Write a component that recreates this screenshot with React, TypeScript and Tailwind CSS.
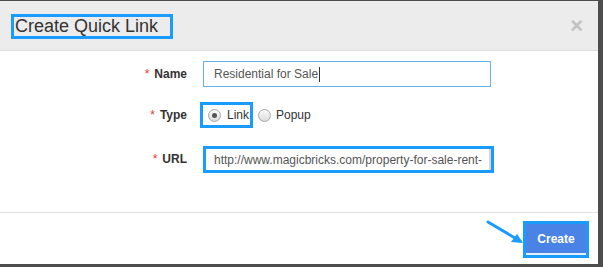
export default function App() {
  return (
    <div className="relative w-[603px] h-[267px] overflow-hidden bg-[#4d4d4d] pt-px font-['Liberation_Sans',Arial,sans-serif]">
      <div className="w-[598px] h-[263px] bg-white flex flex-col">
        {/* header */}
        <div className="h-[50px] shrink-0 bg-[#ececec] border-b border-[#dcdcdc] flex items-center justify-between pl-[11px] pr-[15px]">
          <h1 className="mt-[1px] h-[25px] w-[162px] border-[3px] border-[#1a9bff] pl-[1px] flex items-center whitespace-nowrap text-[18px] leading-none text-[#333]">
            Create Quick Link
          </h1>
          <span className="text-[22px] font-bold text-[#c2c2c2] leading-none">×</span>
        </div>

        {/* body */}
        <div className="flex-1 pt-[10px] text-[12px]">
          <div className="flex items-center h-[26px]">
            <label className="w-[188px] text-right font-bold text-[#333] pr-[1px]">
              <span className="text-[#e53935] font-normal mr-[5px]">*</span>Name
            </label>
            <div className="ml-[15px] w-[288px] h-[26px] border border-[#66afe9] flex items-center pl-[10px] text-[#555]">
              Residential for Sale
              <span className="w-px h-[15px] bg-[#333] ml-px" />
            </div>
          </div>

          <div className="flex items-center h-[26px] mt-[15px]">
            <label className="w-[188px] text-right font-bold text-[#333] pr-[1px]">
              <span className="text-[#e53935] font-normal mr-[5px]">*</span>Type
            </label>
            <div className="ml-[12px] flex items-center text-[#333]">
              <div className="h-[26px] w-[53px] border-[3px] border-[#1a9bff] flex items-center pl-[5px]">
                <span className="w-[13px] h-[13px] rounded-full border border-[#a8a8a8] bg-gradient-to-b from-[#fafafa] to-[#dcdcdc] flex items-center justify-center">
                  <span className="w-[5px] h-[5px] rounded-full bg-[#555]" />
                </span>
                <span className="ml-[6px]">Link</span>
              </div>
              <span className="ml-[5px] w-[13px] h-[13px] rounded-full border border-[#a8a8a8] bg-gradient-to-b from-[#fafafa] to-[#dcdcdc]" />
              <span className="ml-[5px]">Popup</span>
            </div>
          </div>

          <div className="flex items-center h-[27px] mt-[18px]">
            <label className="w-[188px] text-right font-bold text-[#333] pr-[1px] -mt-[2px]">
              <span className="text-[#e53935] font-normal mr-[5px]">*</span>URL
            </label>
            <div className="ml-[15px] w-[291px] h-[27px] border-[3px] border-[#1a9bff] flex items-center">
              <div className="flex-1 h-full border-r-2 border-[#d6d6d6] flex items-center pl-[8px] text-[#555] whitespace-nowrap overflow-hidden">
                http://www.magicbricks.com/property-for-sale-rent-
              </div>
            </div>
          </div>
        </div>

        {/* footer */}
        <div className="h-[52px] shrink-0 border-t border-[#e2e2e2] flex items-start justify-end pr-[9px] pt-[8px]">
          <div className="w-[66px] h-[37px] border-[3px] border-[#1a9bff] flex">
            <button className="flex-1 bg-[#4a83e6] border-b-2 border-[#e8eefc] text-white font-bold text-[12px]">
              Create
            </button>
          </div>
        </div>
      </div>

      {/* annotation arrow */}
      <svg className="absolute left-[486px] top-[219px]" width="40" height="28" viewBox="0 0 40 28">
        <line x1="2" y1="3" x2="34" y2="22" stroke="#1a9bff" strokeWidth="3" strokeLinecap="round" />
        <path d="M37 24 L25 23 L31 15 Z" fill="#1a9bff" />
      </svg>
    </div>
  );
}
